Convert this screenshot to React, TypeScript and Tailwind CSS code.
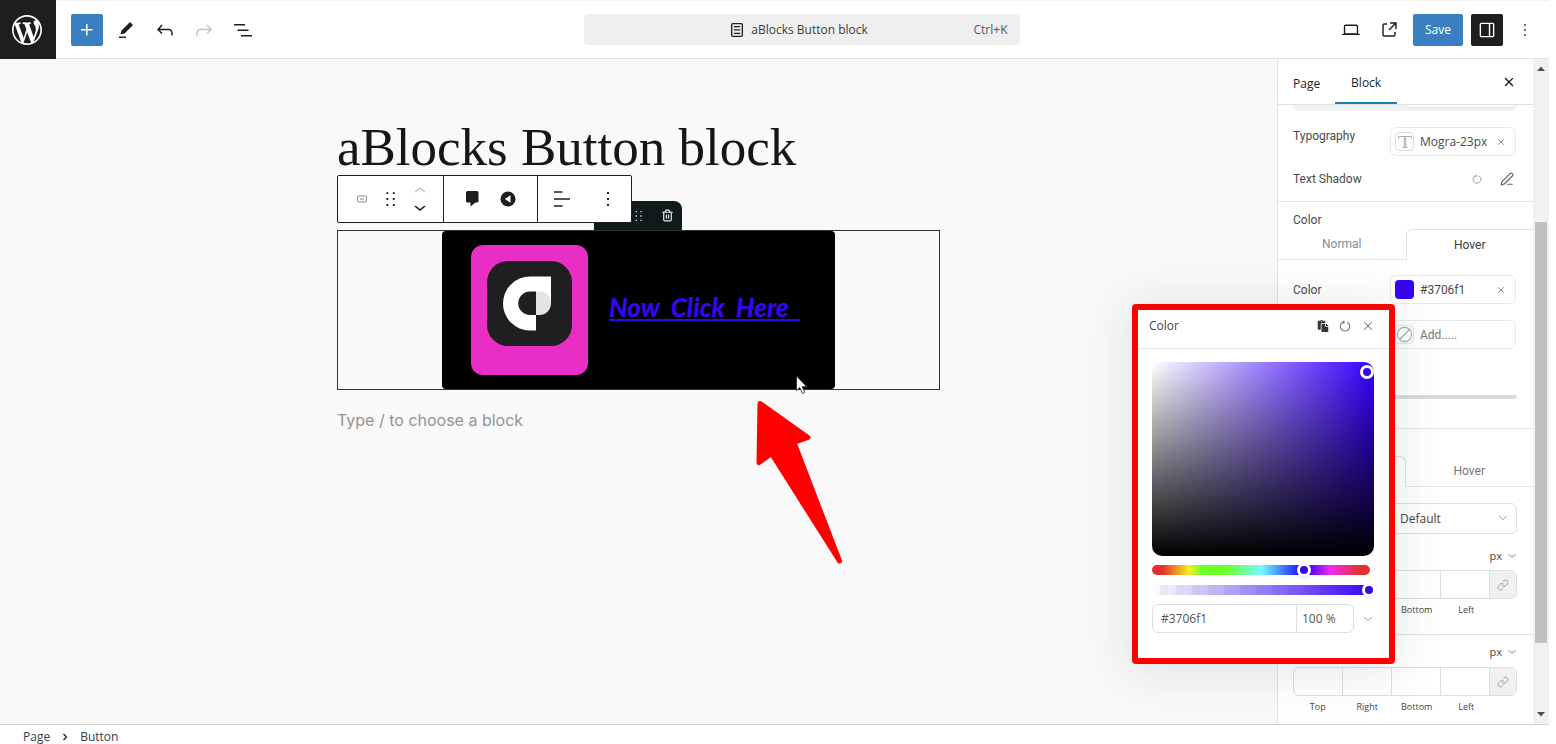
import React from "react";
import { ChevronDown, Link, PenLine, Trash2, X } from "lucide-react";
import { FaPaste } from "react-icons/fa";

type IconProps = { d: string; size?: string; className?: string };

function Glyph({ d, size = "size-6", className = "" }: IconProps) {
  return (
    <svg viewBox="0 0 24 24" className={`${size} shrink-0 fill-current ${className}`} aria-hidden="true">
      <path d={d} />
    </svg>
  );
}

const paths = {
  plus: "M11 12.5V17.5H12.5V12.5H17.5V11H12.5V6H11V11H6V12.5H11Z",
  edit: "m19 7-3-3-8.5 8.5-1 4 4-1L19 7Zm-7 11.5H5V20h7v-1.5Z",
  undo: "M18.3 11.7c-.6-.6-1.4-.9-2.3-.9H6.7l2.9-3.3-1.1-1-4.5 5L8.5 16l1-1-2.7-2.7H16c.5 0 .9.2 1.3.5 1 1 1 3.4 1 4.5v.3h1.5v-.2c0-1.5 0-4.3-1.5-5.7z",
  redo: "M15.6 6.5l-1.1 1 2.9 3.3H8c-.9 0-1.7.3-2.3.9-1.4 1.5-1.4 4.2-1.4 5.6v.2h1.5v-.3c0-1.1 0-3.5 1-4.5.3-.3.7-.5 1.3-.5h9.2L14.5 15l1.1 1.1 4.6-4.6-4.6-5z",
  list: "M3 6h11v1.5H3V6Zm3.500 5.500h11V13h-11v-1.500ZM21 17H10v1.500h11V17Z",
  laptop: "M20.5 16h-.7V8c0-1.1-.9-2-2-2H6.2c-1.1 0-2 .9-2 2v8h-.7c-.8 0-1.5.7-1.5 1.5h20c0-.8-.7-1.5-1.5-1.5zM5.7 8c0-.3.2-.5.5-.5h11.6c.3 0 .5.2.5.5v7.6H5.7V8z",
  external: "M19.5 4.5h-7V6h4.44l-5.97 5.97 1.06 1.06L18 7.06v4.44h1.5v-7Zm-13 1a2 2 0 0 0-2 2v10a2 2 0 0 0 2 2h10a2 2 0 0 0 2-2v-3H17v3a.5.5 0 0 1-.5.5h-10a.5.5 0 0 1-.5-.5v-10a.5.5 0 0 1 .5-.5h3V5.5h-3Z",
  drawer: "M18 4H6c-1.1 0-2 .9-2 2v12c0 1.1.9 2 2 2h12c1.1 0 2-.9 2-2V6c0-1.1-.9-2-2-2zm-4 14.5H6c-.3 0-.5-.2-.5-.5V6c0-.3.2-.5.5-.5h8v13zm4.5-.5c0 .3-.2.5-.5.5h-2.5v-13H18c.3 0 .5.2.5.5v12z",
  more: "M13 19h-2v-2h2v2zm0-6h-2v-2h2v2zm0-6h-2V5h2v2z",
  drag: "M7 6.5h2v-2H7v2zm0 6.5h2v-2H7v2zm0 6.5h2v-2H7v2zM14 4.5v2h2v-2h-2zm0 8.5h2v-2h-2v2zm0 6.5h2v-2h-2v2z",
  close: "M12 13.06l3.712 3.713 1.061-1.06L13.061 12l3.712-3.712-1.06-1.06L12 10.938 8.288 7.227l-1.061 1.06L10.939 12l-3.712 3.712 1.06 1.061L12 13.061z",
  up: "M6.5 12.4L12 8l5.5 4.4-.9 1.2L12 10l-4.5 3.6-1-1.2z",
  down: "M17.5 11.6L12 16l-5.5-4.4.9-1.2L12 14l4.5-3.6 1 1.2z",
  page: "M17 3.5H7A2.2 2.2 0 0 0 4.8 5.700v12.600A2.200 2.200 0 0 0 7 20.500h10a2.200 2.200 0 0 0 2.200-2.200V5.700A2.200 2.200 0 0 0 17 3.500Zm.6 14.800a.6.6 0 0 1-.6.600H7a.6.6 0 0 1-.6-.600V5.700a.6.6 0 0 1 .6-.600h10a.6.6 0 0 1 .6.600v12.600ZM8.200 7.200h7.600v1.500H8.200V7.200Zm0 4h7.600v1.500H8.200v-1.500Zm0 4h7.600v1.500H8.200v-1.500Z",
  wordpress:
    "M20 10c0-5.51-4.49-10-10-10C4.48 0 0 4.49 0 10c0 5.52 4.48 10 10 10 5.51 0 10-4.48 10-10zM7.78 15.37L4.37 6.22c.55-.02 1.17-.08 1.17-.08.5-.06.44-1.13-.06-1.11 0 0-1.45.11-2.37.11-.18 0-.37 0-.58-.01C4.12 2.69 6.87 1.11 10 1.11c2.33 0 4.45.87 6.05 2.34-.68-.11-1.65.39-1.65 1.58 0 .74.45 1.36.9 2.1.35.61.55 1.36.55 2.46 0 1.49-1.4 5-1.4 5l-3.03-8.37c.54-.02.82-.17.82-.17.5-.05.44-1.25-.06-1.22 0 0-1.44.12-2.38.12-.87 0-2.33-.12-2.33-.12-.5-.03-.56 1.2-.06 1.22l.92.08 1.26 3.41zM17.41 10c.24-.64.74-1.87.43-4.25.7 1.29 1.05 2.71 1.05 4.25 0 3.29-1.73 6.24-4.4 7.78.97-2.59 1.94-5.2 2.92-7.78zM6.1 18.09C3.12 16.65 1.11 13.53 1.11 10c0-1.3.23-2.48.72-3.59C3.25 10.3 4.67 14.2 6.1 18.09zm4.03-6.63l2.58 6.98c-.86.29-1.76.45-2.71.45-.79 0-1.57-.11-2.29-.33.81-2.38 1.62-4.74 2.42-7.1z",
};

function ResetIcon({ className }: { className: string }) {
  return (
    <svg viewBox="0 0 12 12" className={className} fill="none" stroke="currentColor" strokeWidth="1.1" aria-hidden="true">
      <path d="M8.200 2.200A4.700 4.700 0 1 1 3.800 2.200H6M5.200.8 3.800 2.200 5.200 3.600" />
    </svg>
  );
}

function Header() {
  return (
    <header className="flex h-[59px] shrink-0 items-center border-t border-b border-t-[#f0f2f3] border-b-[#e2e2e2] bg-white">
      <a href="#dashboard" aria-label="Dashboard" className="-mt-px flex h-[59px] w-14 shrink-0 items-center justify-center self-start bg-[#1e1e1e] pr-[2px] text-white">
        <svg viewBox="-2 -2 24 24" className="size-9 fill-current" aria-hidden="true">
          <path d={paths.wordpress} />
        </svg>
      </a>
      <div className="flex items-center gap-[15px] pr-2 pl-[15px] text-[#1e1e1e]">
        <button aria-label="Add block" className="-mr-1 flex size-8 items-center justify-center rounded-[2px] bg-[#3a7fc0] text-white">
          <Glyph d={paths.plus} />
        </button>
        <button aria-label="Tools"><Glyph d={paths.edit} /></button>
        <button aria-label="Undo"><Glyph d={paths.undo} /></button>
        <button aria-label="Redo" className="text-[#c4c4c4]"><Glyph d={paths.redo} /></button>
        <button aria-label="Document overview"><Glyph d={paths.list} /></button>
      </div>
      <div className="flex flex-1 justify-center">
        <button className="grid h-[31px] w-[436px] grid-cols-[1fr_auto_1fr] items-center rounded bg-[#efefef] px-3 text-[12px] text-[#3c3c3c]">
          <span />
          <span className="flex items-center gap-1 pr-2">
            <Glyph d={paths.page} size="size-5" className="text-[#1e1e1e]" />
            aBlocks Button block
          </span>
          <span className="text-right text-[#555]">Ctrl+K</span>
        </button>
      </div>
      <div className="flex items-center gap-4 pr-[14px] text-[#1e1e1e]">
        <button aria-label="Preview"><Glyph d={paths.laptop} size="size-[22px]" /></button>
        <button aria-label="View page"><Glyph d={paths.external} size="size-[23px]" /></button>
        <div className="-ml-1 flex items-center gap-2">
          <button className="h-8 rounded-[2px] bg-[#3a7fc0] px-3 text-[12px] text-white">Save</button>
          <button aria-label="Settings" className="flex size-8 items-center justify-center rounded-[2px] bg-[#1e1e1e] text-white">
            <Glyph d={paths.drawer} size="size-[22px]" />
          </button>
        </div>
        <button aria-label="Options" className="-ml-1"><Glyph d={paths.more} size="size-5" /></button>
      </div>
    </header>
  );
}

function BlockToolbar() {
  return (
    <div className="relative h-[55px]">
      <div className="absolute top-[26px] left-[257px] flex h-[29px] w-[88px] items-center justify-end gap-[14px] rounded-tr-lg bg-[#0f1a1c] pr-2 text-[#e4e4e4]">
        <button aria-label="Drag button"><Glyph d={paths.drag} size="size-4" /></button>
        <button aria-label="Delete button"><Trash2 className="size-[13px]" strokeWidth={2.2} /></button>
      </div>
      <div className="relative flex h-12 w-[295px] divide-x divide-[#1e1e1e] rounded-[2px] border border-[#1e1e1e] bg-white text-[#1e1e1e]">
        <div className="flex w-[106px] items-center gap-[6px] pl-3">
          <button aria-label="Button block" className="flex size-6 items-center justify-center">
            <svg viewBox="0 0 10 8" className="h-2 w-[10px]" fill="none" stroke="#8a8a8a" aria-hidden="true">
              <rect x=".5" y="1" width="9" height="6" rx="1" />
              <path d="M3 4h4" />
            </svg>
          </button>
          <button aria-label="Drag"><Glyph d={paths.drag} size="size-[22px]" /></button>
          <span className="flex flex-col">
            <button aria-label="Move up" className="flex h-4 w-6 items-center justify-center text-[#c4c4c4]"><Glyph d={paths.up} size="size-6" /></button>
            <button aria-label="Move down" className="flex h-4 w-6 items-center justify-center"><Glyph d={paths.down} size="size-6" /></button>
          </span>
        </div>
        <div className="flex w-[94px] items-center gap-3 pl-4">
          <button aria-label="Comment">
            <svg viewBox="0 0 24 24" className="size-6 fill-current" aria-hidden="true">
              <path d="M7.500 4h9.500A1.500 1.500 0 0 1 18.500 5.500v8.500a1.500 1.500 0 0 1-1.500 1.500h-1.500L10.500 19.500v-4h-3A1.500 1.500 0 0 1 6 14V5.500A1.500 1.500 0 0 1 7.500 4Z" />
            </svg>
          </button>
          <button aria-label="Icon position">
            <svg viewBox="0 0 24 24" className="size-6" aria-hidden="true">
              <circle cx="12" cy="12" r="7.500" fill="#1e1e1e" />
              <path d="M14.500 8.200v7.600L8.800 12Z" fill="white" />
            </svg>
          </button>
        </div>
        <div className="flex flex-1 items-center gap-[22px] pl-3">
          <button aria-label="Align"><Glyph d="M4 4.200h8.500v1.500H4V4.200Zm0 7h16v1.500H4v-1.500Zm0 7h8.500v1.500H4v-1.500Z" /></button>
          <button aria-label="More"><Glyph d={paths.more} /></button>
        </div>
      </div>
    </div>
  );
}

function Canvas() {
  return (
    <main className="min-w-0 flex-1 bg-[#f9f9f9]">
      <div className="relative mx-auto w-[603px] pt-[58px]">
        <h1 className="h-[58px] font-['Liberation_Serif',serif] text-[53px] leading-[60px] text-[#161616]">aBlocks Button block</h1>
        <BlockToolbar />
        <div className="flex h-[160px] justify-center border border-[#333]">
          <a href="#now" className="flex h-[158px] w-[393px] gap-[21px] rounded bg-black pt-[14px] pl-[29px]">
            <span className="flex h-[130px] w-[117px] justify-center rounded-xl bg-[#e92ec6] pt-4">
              <svg viewBox="0 0 85 85" className="size-[85px]" aria-hidden="true">
                <rect width="85" height="85" rx="21" fill="#1f1e21" />
                <path d="M49 69.500H43A27 27 0 0 1 43 15.500H64V42H49V30.500H43A11.700 11.700 0 0 0 43 54H49Z" fill="white" />
                <path d="M49 30.500H53A11 11 0 0 1 64 42A11.700 11.700 0 0 1 52.500 54H49Z" fill="#e4e4e6" />
              </svg>
            </span>
            <span className="mt-[46px] h-8 font-['Lato',sans-serif] text-[26px] leading-8 font-black whitespace-pre text-[#3706f1] italic underline decoration-2 underline-offset-2">
              {"Now  Click  Here  "}
            </span>
          </a>
        </div>
        <p className="pt-[18px] font-['Inter',sans-serif] text-[16px] leading-6 text-[#949494]">Type / to choose a block</p>
        <svg viewBox="0 0 14 20" className="absolute top-[316px] left-[458px] h-5 w-[14px]" aria-hidden="true">
          <path d="M1.500 1v14.500l3.300-3 2.600 6 2.400-1-2.600-5.800h4.500Z" fill="white" stroke="#222" strokeWidth=".8" />
        </svg>
        <svg viewBox="740 390 120 180" className="absolute top-[331px] left-[403px] h-[180px] w-[120px]" aria-hidden="true">
          <path d="M760 403.500 808 437.500 794 442.500 839.500 561 771.500 453.500 759 462.500Z" fill="#f00" stroke="#f00" strokeWidth="5" strokeLinejoin="round" />
        </svg>
      </div>
    </main>
  );
}

const control = "flex h-[29px] w-[126px] items-center gap-[6px] rounded-md border border-[#e8eaec] bg-white pr-[9px] pl-1";

function Sides({ name }: { name: string }) {
  return (
    <div className="pr-4 pl-[15px]">
      <div className="flex h-[29px] rounded-md border border-[#dcdfe2]">
        {["Top", "Right", "Bottom", "Left"].map((side) => (
          <input key={side} aria-label={`${name} ${side}`} className="w-0 min-w-0 flex-1 border-r border-[#dcdfe2] bg-transparent px-1 text-[12px] outline-none" />
        ))}
        <button aria-label="Link sides" className="flex w-[26px] items-center justify-center rounded-r-md bg-[#f0f0f0] text-[#8a8f94]">
          <Link className="size-3" strokeWidth={1.5} />
        </button>
      </div>
      <div className="flex pt-1 pr-[26px] text-center text-[9px] leading-[14px] text-[#444]">
        {["Top", "Right", "Bottom", "Left"].map((side) => (
          <span key={side} className="flex-1">{side}</span>
        ))}
      </div>
    </div>
  );
}

function UnitButton() {
  return (
    <button className="flex w-full items-center justify-end gap-1 pr-[15px] text-[11px] leading-4 text-[#444]">
      px <ChevronDown className="size-3" strokeWidth={1.5} />
    </button>
  );
}

function Sidebar() {
  return (
    <aside className="flex w-[272px] shrink-0 border-l border-[#e0e0e0] bg-white">
      <div className="min-w-0 flex-1 text-[12px] text-[#4a4a4a]">
        <div className="flex h-[46px] items-stretch border-b border-[#e0e0e0] text-[#1e1e1e]">
          <button className="px-[15px] pt-1 font-medium">Page</button>
          <button className="w-[62px] border-b-2 border-[#1a80b0] pt-1 font-medium">Block</button>
          <button aria-label="Close settings" className="ml-auto pr-[13px]"><Glyph d={paths.close} size="size-[22px]" /></button>
        </div>
        <div className="mr-4 ml-[15px] flex h-[6px] justify-end rounded-b-md bg-[#f0f1f3] pr-[3px]">
          <span className="h-[3px] w-[106px] rounded-b-md border-b border-[#ddd] bg-white" />
        </div>
        <div className="font-['Roboto',sans-serif]">
          <div className="flex items-start justify-between pt-4 pr-[17px] pl-[15px]">
            <span>Typography</span>
            <div className={control}>
              <span className="flex size-[19px] items-center justify-center rounded border border-[#ddd]">
                <svg viewBox="0 0 16 16" className="size-4" fill="none" stroke="#999" aria-hidden="true">
                  <path d="M1.500 5V2.500h13V5M7.300 2.500v11M8.700 2.500v11M5.500 13.500h5" strokeWidth=".8" />
                </svg>
              </span>
              <button className="font-['Open_Sans',sans-serif] text-[12px]">Mogra-23px</button>
              <button aria-label="Clear typography" className="ml-auto text-[#777]"><X className="size-[10px]" /></button>
            </div>
          </div>
          <div className="flex h-[46px] items-center justify-between border-b border-[#e2e4e6] pr-[19px] pl-[15px]">
            <span>Text Shadow</span>
            <span className="flex items-center gap-[18px] text-[#666]">
              <button aria-label="Reset shadow"><ResetIcon className="size-[10px] text-[#999]" /></button>
              <button aria-label="Edit shadow"><PenLine className="size-[14px]" strokeWidth={2} /></button>
            </span>
          </div>
          <p className="h-[27px] pt-[9px] pl-[15px] leading-[18px]">Color</p>
          <div className="grid h-[31px] grid-cols-2 text-[#848a90]">
            <button className="border-b border-[#e0e2e4]">Normal</button>
            <button className="rounded-tl-md border-t border-l border-[#e0e2e4] text-[#3c3c3c]">Hover</button>
          </div>
          <div className="flex items-center justify-between pt-[15px] pr-[17px] pl-[15px]">
            <span>Color</span>
            <div className={control}>
              <button aria-label="Pick color" className="size-[19px] rounded bg-[#3706f1]" />
              <span>#3706f1</span>
              <button aria-label="Clear color" className="ml-auto text-[#777]"><X className="size-[10px]" /></button>
            </div>
          </div>
          <div className="flex justify-end pt-4 pr-[17px]">
            <button className={control}>
              <svg viewBox="0 0 20 20" className="size-[19px]" fill="none" stroke="#aaa" aria-hidden="true">
                <rect x=".5" y=".5" width="19" height="19" rx="4" stroke="#e4e4e4" />
                <circle cx="10" cy="10" r="7.500" strokeWidth="1.200" />
                <path d="m5 15 10-10" strokeWidth="1.200" />
              </svg>
              <span className="text-[#777]">Add.....</span>
            </button>
          </div>
          <div className="mt-[46px] mr-4 ml-[15px] h-1 rounded bg-[#dcdddd]" />
          <div className="h-[30px] border-b border-[#e2e4e6]" />
          <div className="mt-[27px] grid h-[31px] grid-cols-2 text-[#777]">
            <span className="rounded-tr-md border-t border-r border-[#e0e2e4]" />
            <button className="border-b border-[#e0e2e4]">Hover</button>
          </div>
        </div>
        <div className="pt-4 pr-4 pb-[14px] pl-[105px] font-['Open_Sans',sans-serif]">
          <div className="relative text-[#444]">
            <select aria-label="Border style" className="h-[31px] w-full appearance-none rounded-md border border-[#dcdfe2] bg-white pl-4 text-[12px]">
              <option>Default</option>
            </select>
            <ChevronDown className="pointer-events-none absolute top-2 right-[7px] size-[14px] text-[#888]" strokeWidth={1.5} />
          </div>
        </div>
        <UnitButton />
        <div className="h-[6px]" />
        <Sides name="Border radius" />
        <div className="mt-[17px] h-[10px] border-t border-[#dfe2e4]" />
        <UnitButton />
        <div className="h-[7px]" />
        <Sides name="Spacing" />
      </div>
      <div className="flex w-4 shrink-0 flex-col items-center bg-[#f1f1f1] py-[6px]">
        <svg viewBox="0 0 8 8" className="size-2" aria-hidden="true"><path d="M0 6 4 1.500 8 6Z" fill="#505050" /></svg>
        <div className="grow-[149]" />
        <div className="w-3 grow-[421] bg-[#c1c1c1]" />
        <div className="grow-[67]" />
        <svg viewBox="0 0 8 8" className="size-2" aria-hidden="true"><path d="M0 2 4 6.500 8 2Z" fill="#505050" /></svg>
      </div>
    </aside>
  );
}

const slider =
  "absolute inset-y-0 -right-[6px] left-0 w-[224px] cursor-pointer appearance-none bg-transparent [&::-webkit-slider-thumb]:size-[14px] [&::-webkit-slider-thumb]:appearance-none [&::-webkit-slider-thumb]:rounded-full [&::-webkit-slider-thumb]:border-[3px] [&::-webkit-slider-thumb]:border-white [&::-webkit-slider-thumb]:bg-[#3706f1] [&::-webkit-slider-thumb]:shadow";

function ColorPopover() {
  return (
    <section aria-label="Color picker" className="absolute top-[304px] right-[161px] h-[360px] w-[263px] rounded border-[6px] border-[#f00] bg-white text-[12px] text-[#555] shadow-[0_4px_48px_4px_rgba(40,60,60,0.12)]">
      <div className="flex h-[39px] items-center border-b border-[#e4e6e8] pr-[14px] pb-[6px] pl-[11px]">
        <h2 className="mr-auto font-medium text-[#444]">Color</h2>
        <div className="flex items-center gap-[10px] text-[#777]">
          <button aria-label="Paste color"><FaPaste className="size-3 text-[#3a3434]" /></button>
          <button aria-label="Reset color"><ResetIcon className="size-3" /></button>
          <button aria-label="Close"><X className="size-[14px]" strokeWidth={1.8} /></button>
        </div>
      </div>
      <div className="px-[14px] pt-[13px]">
        <div className="relative h-[194px] w-[222px] rounded-[10px] bg-[#3700ff] bg-[linear-gradient(to_top,#000,transparent),linear-gradient(to_right,#fff,transparent)]">
          <button aria-label="Shade" className="absolute top-[3px] right-0 size-[14px] rounded-full border-[3px] border-white bg-[#3706f1] shadow" />
        </div>
        <div className="relative mt-[9px] h-[10px] w-[218px] rounded-full bg-[linear-gradient(to_right,#e53030_5%,#f8f020_17%,#6cff28_23%,#6cff28_34%,#74fcff_50%,#2020ff_67%,#3b00ef_71%,#f02cf8_82%,#e53030_95%)]">
          <input type="range" aria-label="Hue" min={0} max={360} defaultValue={249} className={slider} />
        </div>
        <div className="relative mt-[10px] h-[10px] w-[218px] rounded-full bg-[linear-gradient(to_right,rgba(55,6,241,0),#3706f1),repeating-linear-gradient(to_right,#fff_0_8px,#f5f5f7_8px_16px)]">
          <input type="range" aria-label="Opacity" min={0} max={100} defaultValue={100} className={slider} />
        </div>
        <div className="mt-[9px] flex items-center gap-[7px]">
          <div className="flex h-[29px] w-[202px] rounded-md border border-[#dcdfe2] font-['Open_Sans',sans-serif]">
            <input aria-label="Hex" defaultValue="#3706f1" className="w-0 flex-1 bg-transparent px-2 outline-none" />
            <input aria-label="Opacity percent" defaultValue="100 %" className="w-[57px] border-l border-[#dcdfe2] bg-transparent px-[5px] outline-none" />
          </div>
          <button aria-label="Color format"><ChevronDown className="size-[14px] text-[#888]" strokeWidth={1.5} /></button>
        </div>
      </div>
    </section>
  );
}

export default function App() {
  return (
    <div className="bg-white font-['Open_Sans','Noto_Sans',sans-serif]">
      <div className="relative flex min-h-screen flex-col pr-[7px]">
        <Header />
        <div className="flex flex-1 items-stretch">
          <Canvas />
          <Sidebar />
        </div>
        <footer className="flex h-5 shrink-0 items-center gap-3 border-t border-[#d0d0d0] pt-[5px] pl-[23px] text-[12px] leading-[14px] text-[#3c3c3c]">
          <a href="#page">Page</a>
          <svg viewBox="0 0 6 8" className="h-2 w-[6px]" fill="none" stroke="#222" strokeWidth="1.300" aria-hidden="true"><path d="m1.500 1 3 3-3 3" /></svg>
          <a href="#button">Button</a>
        </footer>
        <ColorPopover />
      </div>
    </div>
  );
}
